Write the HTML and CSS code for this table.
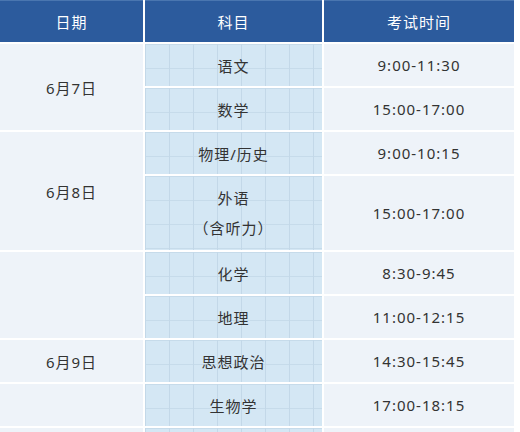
FILE: index.html
```html
<!DOCTYPE html>
<html lang="zh">
<head>
<meta charset="utf-8">
<link rel="stylesheet" href="styles.css">
</head>
<body>
<div class="table">
  <div class="th">日期</div>
  <div class="th">科目</div>
  <div class="th">考试时间</div>

  <div class="date r1">6月7日</div>
  <div class="subj">语文</div>
  <div class="time">9:00-11:30</div>
  <div class="subj">数学</div>
  <div class="time">15:00-17:00</div>

  <div class="date r2">6月8日</div>
  <div class="subj">物理/历史</div>
  <div class="time">9:00-10:15</div>
  <div class="subj two">外语<br>（含听力）</div>
  <div class="time">15:00-17:00</div>

  <div class="date r3"></div>
  <div class="subj">化学</div>
  <div class="time">8:30-9:45</div>
  <div class="subj">地理</div>
  <div class="time">11:00-12:15</div>

  <div class="date">6月9日</div>
  <div class="subj">思想政治</div>
  <div class="time">14:30-15:45</div>

  <div class="date"></div>
  <div class="subj">生物学</div>
  <div class="time">17:00-18:15</div>

  <div class="date tail"></div>
  <div class="subj tail"></div>
  <div class="time tail"></div>
</div>
</body>
</html>
```

FILE: styles.css
```css
html, body {
  margin: 0;
  padding: 0;
  background: #ffffff;
}
body {
  width: 520px;
  height: 432px;
  overflow: hidden;
  font-family: "Noto Sans", "Noto Sans CJK SC", sans-serif;
}
.table {
  display: grid;
  width: 514px;
  grid-template-columns: 143px 177px 190px;
  grid-template-rows: 42px 42px 42px 42px 74px 42px 42px 42px 42px 20px;
  gap: 2px;
}
.table > div {
  display: flex;
  align-items: center;
  justify-content: center;
  text-align: center;
  font-size: 15px;
  letter-spacing: 1px;
  color: #333333;
}
.th {
  background: #2c5b9d;
  color: #ffffff !important;
  border-top: 1px solid #4a76b0;
  box-sizing: border-box;
}
.date, .time {
  background: #eef3f9;
}
.subj {
  background-color: #d4e7f4;
  background-image:
    linear-gradient(to right, #c3d8e8 1px, transparent 1px),
    linear-gradient(to bottom, #c6dbea 1px, transparent 1px);
  background-size: 24px 24px;
  background-position: 0 0;
}
.two {
  line-height: 30px;
}
.r1, .r2, .r3 {
  grid-row: span 2;
}
```
